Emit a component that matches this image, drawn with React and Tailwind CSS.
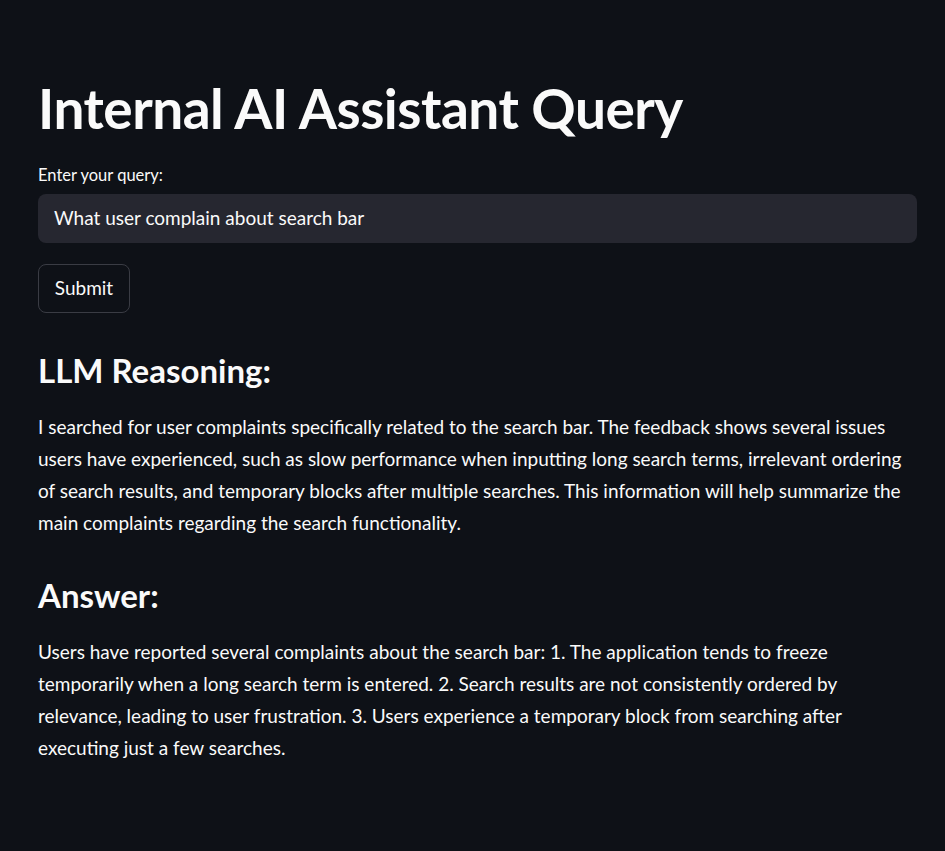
const App = () => {
    return (
        <div className="min-h-screen w-full bg-[#0e1117] text-[#fafafa]" style={{ fontFamily: 'Lato, "Noto Sans", sans-serif' }}>
            <div className="flex flex-col px-[38px] pt-[75px] pr-[28px]">

                <h1 className="text-[55px] leading-[66px] font-bold tracking-[-0.5px]">
                    Internal AI Assistant Query
                </h1>

                <label className="mt-[24px] text-[16.5px] leading-[20px]">Enter your query:</label>
                <div className="mt-[9px] h-[49px] w-full rounded-lg bg-[#262730] flex items-center px-4 text-[19px]">
                    What user complain about search bar
                </div>

                <div className="mt-[21px]">
                    <button className="h-[49px] w-[92px] rounded-lg border border-[#3a3c44] text-[19px] flex items-center justify-center">
                        Submit
                    </button>
                </div>

                <h3 className="mt-[37px] text-[33px] leading-[40px] font-bold">LLM Reasoning:</h3>
                <p className="mt-[21px] text-[19px] leading-[32px]">
                    I searched for user complaints specifically related to the search bar. The feedback shows several issues users have experienced, such as slow performance when inputting long search terms, irrelevant ordering of search results, and temporary blocks after multiple searches. This information will help summarize the main complaints regarding the search functionality.
                </p>

                <h3 className="mt-[36px] text-[33px] leading-[40px] font-bold">Answer:</h3>
                <p className="mt-[21px] text-[19px] leading-[32px]">
                    Users have reported several complaints about the search bar: 1. The application tends to freeze temporarily when a long search term is entered. 2. Search results are not consistently ordered by relevance, leading to user frustration. 3. Users experience a temporary block from searching after executing just a few searches.
                </p>
            </div>
        </div>
    )
}

export default App;
